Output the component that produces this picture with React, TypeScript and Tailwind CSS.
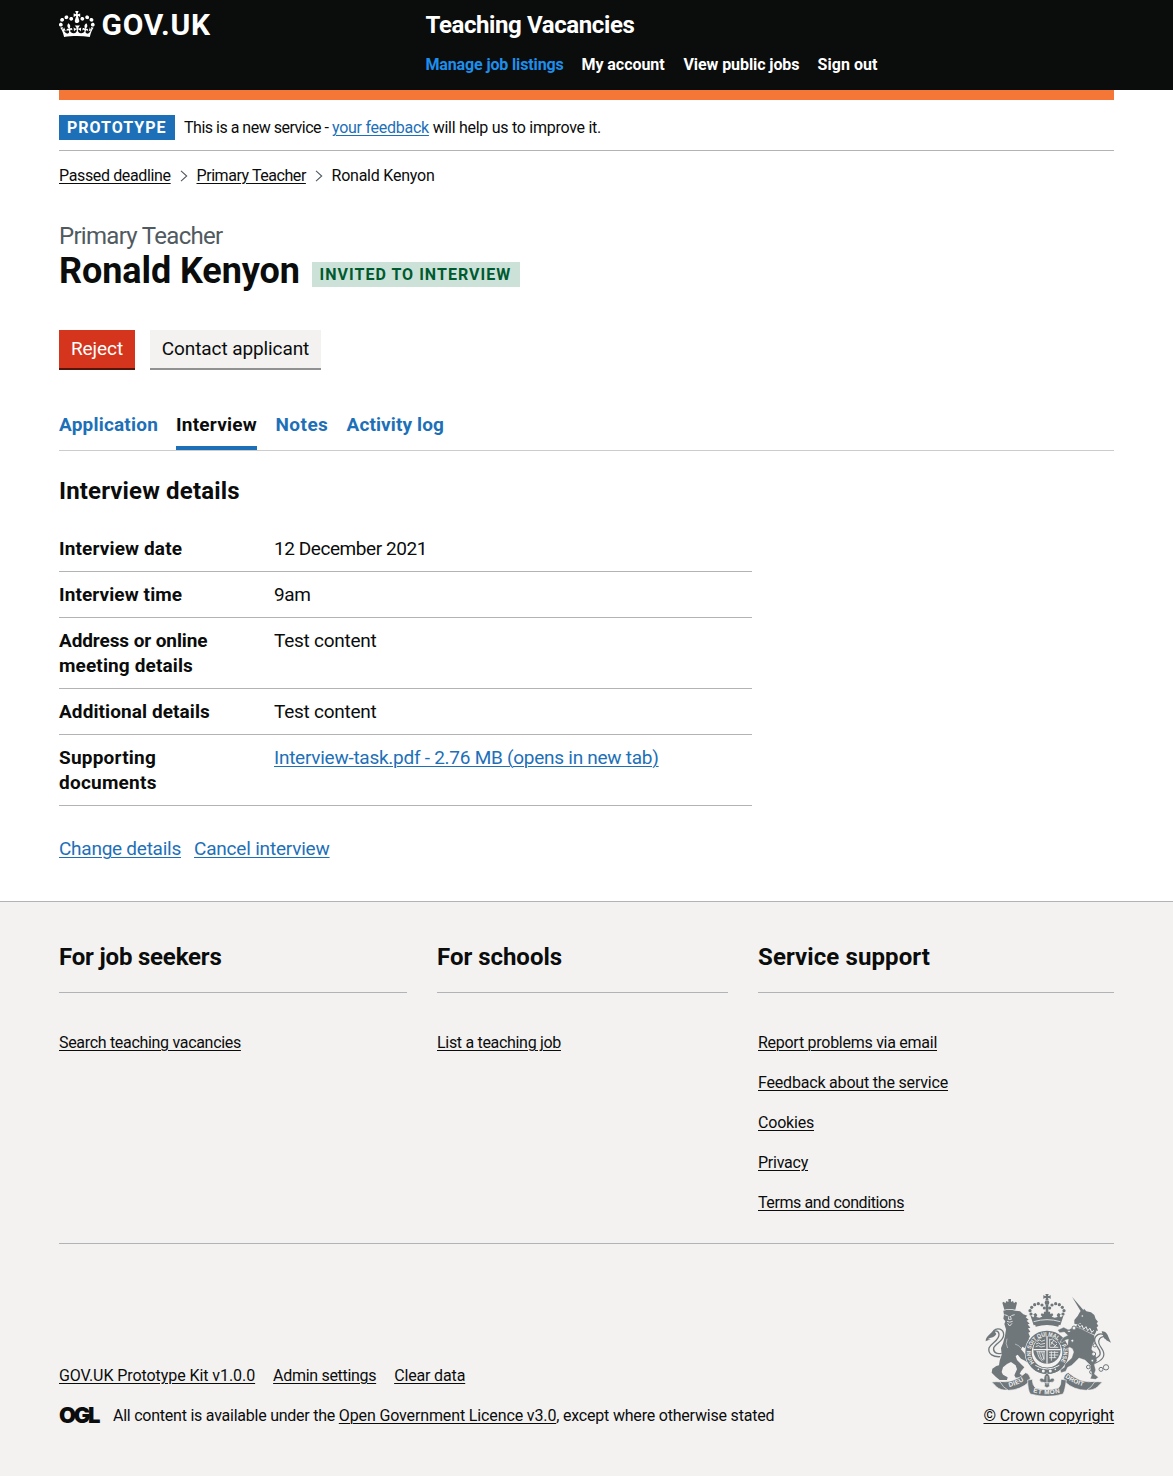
import type { ReactNode } from "react";

const LINK = "underline decoration-1 underline-offset-[2px] whitespace-pre";

function Link({ className = "", children }: { className?: string; children: ReactNode }) {
  return (
    <a href="#" className={`${LINK} ${className}`}>
      {children}
    </a>
  );
}

function Crown() {
  return (
    <svg viewBox="0 4.1 36 26" className="h-[26px] w-[36px] fill-white" aria-hidden="true">
      <path d="M6.7 12.2c1 .4 2.1-.1 2.5-1s-.1-2.1-1-2.5c-1-.4-2.1.1-2.5 1-.4 1 0 2.1 1 2.5m-4.3 2.5c1 .4 2.1-.1 2.5-1s-.1-2.1-1-2.5c-1-.4-2.1.1-2.5 1-.5 1 0 2.1 1 2.5m-1.3 4.8c1 .4 2.1-.1 2.5-1 .4-1-.1-2.1-1-2.5-1-.4-2.1.1-2.5 1-.4 1 0 2.1 1 2.5m10.4-5.8c1 .4 2.1-.1 2.5-1s-.1-2.1-1-2.5c-1-.4-2.1.1-2.5 1s0 2.1 1 2.5m17.4-1.5c-1 .4-2.1-.1-2.5-1s.1-2.1 1-2.5c1-.4 2.1.1 2.5 1 .5 1 0 2.1-1 2.5m4.3 2.5c-1 .4-2.1-.1-2.5-1s.1-2.1 1-2.5c1-.4 2.1.1 2.5 1 .5 1 0 2.1-1 2.5m1.3 4.8c-1 .4-2.1-.1-2.5-1-.4-1 .1-2.1 1-2.5 1-.4 2.1.1 2.5 1 .5 1 0 2.1-1 2.5m-10.4-5.8c-1 .4-2.1-.1-2.5-1s.1-2.1 1-2.5c1-.4 2.1.1 2.5 1s0 2.1-1 2.5m-5.3-4.9 2.4 1.3V6.5l-2.4.8c-.1-.1-.1-.2-.2-.2s1-3 1-3h-3.4l1 3c-.1.1-.2.1-.2.2-.1.1-2.4-.7-2.4-.7v3.5L17 8.8c.1.1.1.2.2.2l-1.3 4.4c-.1.2-.1.4-.1.6 0 1.1.8 2 1.9 2.2h.7c1-.2 1.9-1.1 1.9-2.1 0-.2 0-.4-.1-.6l-1.3-4.4c-.1-.2 0-.2.1-.3m-1 20.3c4.6 0 8.9.3 12.8.9 1.1-4.6 2.4-7.2 3.8-9.1l-2.6-.9c.3 1.3.3 1.9 0 2.8-.4-.4-.8-1.2-1.1-2.4l-1.2 4.2c.8-.5 1.4-.9 2-.9-1.2 2.6-2.7 3.2-3.6 3-1.2-.2-1.7-1.3-1.5-2.2.3-1.3 1.6-1.6 2.2-.1 1.2-2.4-.8-3.1-2.1-2.4 1.9-1.9 2.2-3.6.6-5.7-2.2 1.7-2.2 3.3-1.2 5.6-1.3-1.5-3.3-.7-2.5 1.7.9-1.4 2.1-.5 1.9.8-.2 1.2-1.7 2.1-3.7 1.9-2.7-.2-2.9-2.1-2.9-3.6.7-.1 1.9.5 2.9 1.9l.4-4.3c-1.1 1.1-2.1 1.4-3.2 1.4.4-1.2 2.1-3 2.1-3h-5.4s1.7 1.8 2.1 3c-1.1 0-2.1-.2-3.2-1.4l.4 4.3c1-1.4 2.2-2 2.9-1.9-.1 1.5-.2 3.4-2.9 3.6-1.9.2-3.5-.7-3.7-1.9-.2-1.3 1-2.2 1.9-.8.7-2.4-1.3-3.1-2.6-1.7 1-2.3 1-4-1.2-5.6-1.6 2.1-1.3 3.8.6 5.7-1.3-.7-3.2 0-2.1 2.4.6-1.5 1.9-1.1 2.2.1.2.9-.4 1.9-1.5 2.2-1 .2-2.5-.5-3.7-3 .7 0 1.3.4 2 .9L5 20.4c-.3 1.2-.7 1.9-1.2 2.4-.3-.8-.2-1.5 0-2.8l-2.6.9C2.7 22.8 4 25.4 5.1 30c3.8-.5 8.2-.9 12.7-.9" />
    </svg>
  );
}

function Chevron() {
  return (
    <svg viewBox="0 0 8 12" className="h-[12px] w-[8px] fill-none stroke-[#505a5f]" aria-hidden="true">
      <path d="M1 .8 6.7 6 1 11.2" strokeWidth="1.1" />
    </svg>
  );
}

const CROWN_PEARLS = [
  [168, 86], [165, 76], [170, 66], [179, 58], [190, 55], [201, 59], [208, 68],
  [264, 86], [267, 76], [262, 66], [253, 58], [242, 55], [231, 59], [224, 68],
];

function Crest() {
  return (
    <svg viewBox="30 26 378 306" className="h-[102px] w-[126px]" fill="#6f777b" aria-hidden="true">
      <defs>
        <path id="garter" d="M178 232 A49 49 0 1 1 254 232" />
        <path id="scrollLeft" d="M103 305 Q133 298 160 277" />
        <path id="scrollMid" d="M174 321 Q216 333 262 320" />
        <path id="scrollRight" d="M270 276 Q298 297 338 306" />
      </defs>

      {/* lion */}
      <g>
        <path d="M82 52l4-3 5 5 3-7 6 3v-9h8v9l6-3 3 7 5-5 4 3-5 21q-17-4-33 0z" />
        <path d="M85 76 Q103 70 121 76 L135 78 L145 87 L157 91 L152 96 L161 103 L155 106 L164 115 L158 117 L166 127 L159 129 L166 139 L160 142 L165 154 L161 159 L172 176 L178 186 L176 198 L164 200 L154 190 L142 184 L138 192 L150 206 L160 216 L168 226 L160 234 L150 226 L138 220 L128 208 L122 212 L126 224 L140 238 L148 246 L138 258 L134 266 L142 270 L142 276 L122 277 L118 270 L126 252 L122 240 L108 230 L96 236 L84 246 L80 260 L84 268 L98 276 L96 284 L74 284 L62 274 L50 262 L52 250 L64 242 L72 240 L74 226 L80 208 L78 188 L84 174 L90 152 L93 132 L88 116 L91 108 L85 100 L87 88Z" />
        <path d="M88 88l10 3M109 91l10-3M102 92l-2 10h9l-3-10M96 108q8 5 17 0M98 114l6 8 7-8" fill="none" stroke="#f3f2f1" strokeWidth="2.5" />
        <path d="M96 160q-6 14 2 28M120 176q12 4 18 12" fill="none" stroke="#f3f2f1" strokeWidth="1.5" />
        <path d="M76 214C56 216 38 206 42 188c6-16 32-22 30-42-2-12-16-13-20 0" fill="none" stroke="#6f777b" strokeWidth="4" />
        <path d="M80 204c-16 4-26-4-24-16 4-14 30-20 30-40 0-18-20-22-30-12" fill="none" stroke="#6f777b" strokeWidth="4" />
        <path d="M32 168c0-16 14-20 24-34l8 12c-6 12-20 10-26 16 4 0 6 0 10-1-6 3-12 4-16 7z" />
      </g>

      {/* garter and shield */}
      <circle cx="216" cy="201" r="67" fill="#f3f2f1" />
      <circle cx="216" cy="201" r="55.5" fill="none" stroke="#6f777b" strokeWidth="19" />
      <circle cx="216" cy="195" r="43" fill="#f3f2f1" />
      <circle cx="216" cy="194" r="41" />
      <text fill="#f3f2f1" fontSize="17.5" fontWeight="700" fontFamily="Liberation Sans, sans-serif">
        <textPath href="#garter" textLength="216" lengthAdjust="spacingAndGlyphs">HONI SOIT QUI MAL Y PENSE</textPath>
      </text>
      <g stroke="#f3f2f1" strokeWidth="2.4" fill="none">
        <path d="M216 153v82M175 193h82" strokeWidth="3.5" />
        <path d="M186 168l8-4 6 4 10-4M183 176l8-3 6 4 13-3M182 184l8-3 8 4 12-3" />
        <path d="M224 160v26h26M224 164l8-3 14 12M228 170l16 14M236 164l-8 14M246 176l-10 10" />
        <path d="M188 199c0 12 6 22 14 28M194 199c0 10 4 20 11 26M200 199l7 24M207 198v24M184 199h26" />
        <path d="M222 201h28M222 209h28M222 217h22M229 198v28M239 198v20" />
      </g>
      <path d="M182 238q34 18 70 0l8 12q-42 30-86 0z" />
      <path d="M181 240q36 22 72 0" fill="none" stroke="#f3f2f1" strokeWidth="3" />
      <g fill="#f3f2f1">
        <circle cx="205" cy="257" r="4.5" />
        <circle cx="226" cy="257" r="4.5" />
        <circle cx="190" cy="252" r="2.5" />
        <circle cx="241" cy="252" r="2.5" />
      </g>

      {/* unicorn */}
      <g>
        <path d="M291 34l36 42-8 5z" />
        <path d="M298 104l10-12 8-14 8-1 3-7 7 8 14 3 10 8 4 12 7 8-4 5 5 8-5 4 4 10-6 0-3 7q-18-14-38-18l-6-12-12 4-6-2z" />
        <path d="M308 112l56 26-5 10-56-22z" />
        <path d="M309 117l6 9 6-6 5 12 7-8 5 12 7-7 5 12 7-6" fill="none" stroke="#f3f2f1" strokeWidth="3" />
        <circle cx="322" cy="92" r="2.5" fill="#f3f2f1" />
        <path d="M286 130 L300 124 L318 130 L358 150 L360 164 L352 182 L350 192 L362 210 L366 226 L358 238 L362 254 L358 266 L370 276 L362 282 L346 280 L351 266 L346 252 L346 240 L330 224 L312 218 L298 232 L290 240 L278 246 L272 258 L258 262 L256 254 L268 246 L270 236 L290 218 L296 200 L292 190 L284 186 L272 192 L266 186 L278 178 L280 162 L272 164 L262 172 L256 168 L266 156 L278 150 L268 140 L254 142 L248 134 L266 126 L282 134Z" stroke="#f3f2f1" strokeWidth="1" />
        <path d="M350 226c18-10 30-14 24-30-8-16-22-28-12-42 8-12 22-10 30-2" fill="none" stroke="#6f777b" strokeWidth="4" />
        <path d="M360 234c20-8 32-20 24-38-8-14-18-24-10-36 6-8 16-8 22-2" fill="none" stroke="#6f777b" strokeWidth="3.5" />
        <path d="M380 138c10-2 18 8 20 16l8 18c-8-5-12-4-16-10-4 0-8-10-12-24z" />
        <g fill="none" stroke="#6f777b" strokeWidth="3">
          <circle cx="340" cy="245" r="5.5" />
          <circle cx="350" cy="260" r="6" />
          <circle cx="378" cy="252" r="6" />
          <circle cx="393" cy="246" r="8" />
        </g>
        <g fill="#f3f2f1" stroke="#6f777b" strokeWidth="3">
          <circle cx="297" cy="128" r="6" />
          <circle cx="282" cy="138" r="4" />
          <circle cx="292" cy="166" r="4.5" />
          <circle cx="359" cy="180" r="5" />
          <circle cx="356" cy="206" r="6" />
          <circle cx="352" cy="226" r="4" />
        </g>
      </g>

      {/* royal crown */}
      <path d="M211 26h10l-2 6h5v-2h3v10h-3v-2h-5l2 7h-10l2-7h-5v2h-3V30h3v2h5z" />
      <circle cx="216" cy="52" r="7" />
      <path d="M212 58h8v34h-8z" />
      {CROWN_PEARLS.map(([x, y]) => (
        <circle key={`${x}-${y}`} cx={x} cy={y} r="4.8" />
      ))}
      <path d="M166 90l9 6 3-4-3-5 7-4 5 6-3 6 9 2 9-3-5-5 3-5 6 2 1-7h8v8h2v-8h8l1 7 6-2 3 5-5 5 9 3 9-2-3-6 5-6 7 4-3 5 3 4 9-6-10 30q-40-14-80 0z" />
      <path d="M176 109q40-12 80 0" fill="none" stroke="#f3f2f1" strokeWidth="2.5" />
      <path d="M180 116q36-10 72 0l-2 8q-34-10-68 0z" />

      {/* motto ribbon */}
      <g stroke="#f3f2f1" strokeWidth="2">
        <path d="M50 290q14-2 28 0l22 24q-24 2-36-10z" />
        <path d="M382 290q-14-2-28 0l-22 24q24 2 36-10z" />
        <path d="M74 288q40 8 78-26 10 2 14 16l-4 12q-26 24-62 25-16-8-26-27z" />
        <path d="M360 288q-40 8-80-26-10 2-14 16l4 12q26 24 64 25 16-8 26-27z" />
        <path d="M158 284l14-2q0 18 10 26 34 10 68 0 9-8 8-26l16 2q-4 32-10 42-46 14-98 0-8-12-8-42z" />
      </g>
      <path d="M207 282q-2-10 9-20 11 10 9 20 10-7 13 1 0 9-12 8l-4 4 2 8-8 4-8-4 2-8-4-4q-12 1-12-8 3-8 13-1z" stroke="#f3f2f1" strokeWidth="1.5" />
      <path d="M216 272v26M204 292h24" stroke="#f3f2f1" strokeWidth="2" />
      <g fill="#f3f2f1" fontSize="19" fontWeight="700" fontFamily="Liberation Sans, sans-serif">
        <text><textPath href="#scrollLeft" textLength="48">DIEU</textPath></text>
        <text><textPath href="#scrollMid" textLength="82">ET MON</textPath></text>
        <text><textPath href="#scrollRight" textLength="60">DROIT</textPath></text>
      </g>
    </svg>
  );
}

const SUMMARY: { key: { text: string; tracking: string }[]; value: ReactNode }[] = [
  {
    key: [{ text: "Interview date", tracking: "tracking-[0.14px]" }],
    value: <span className="tracking-[-0.43px]">12 December 2021</span>,
  },
  {
    key: [{ text: "Interview time", tracking: "tracking-[0.1px]" }],
    value: <span className="tracking-[-0.35px]">9am</span>,
  },
  {
    key: [
      { text: "Address or online", tracking: "tracking-[-0.1px]" },
      { text: "meeting details", tracking: "tracking-[0.13px]" },
    ],
    value: <span className="tracking-[-0.25px]">Test content</span>,
  },
  {
    key: [{ text: "Additional details", tracking: "tracking-[0.09px]" }],
    value: <span className="tracking-[-0.25px]">Test content</span>,
  },
  {
    key: [
      { text: "Supporting", tracking: "tracking-[0.22px]" },
      { text: "documents", tracking: "tracking-[0.24px]" },
    ],
    value: <Link className="tracking-[-0.26px] text-[#1d70b8]">Interview-task.pdf - 2.76 MB (opens in new tab)</Link>,
  },
];

function FooterColumn({ title, titleClass, className, children }: { title: string; titleClass: string; className: string; children: ReactNode }) {
  return (
    <div className={className}>
      <h2 className={`border-b border-[#b1b4b6] pb-5 text-[24px] leading-[30px] font-bold whitespace-nowrap ${titleClass}`}>{title}</h2>
      <ul className="mt-10 flex flex-col gap-5">{children}</ul>
    </div>
  );
}

export default function App() {
  return (
    <div className="flex min-h-[1476px] w-full flex-col bg-white font-['Roboto',sans-serif] text-[16px] leading-5 text-[#0b0c0c]">
      <header className="h-[90px] bg-[#0b0c0c] text-white">
        <div className="mx-[59px] flex">
          <div className="flex w-[366.5px] pt-[11px]">
            <Crown />
            <span className="ml-[6.5px] h-[30px] text-[30px] leading-[28px] font-bold tracking-[0.75px]">GOV.UK</span>
          </div>
          <div>
            <div className="pt-[10px] text-[24px] leading-[30px] font-bold tracking-[-0.39px]">Teaching Vacancies</div>
            <nav className="mt-[15px] flex font-bold whitespace-nowrap">
              <a href="#" className="w-[156px] tracking-[-0.14px] text-[#1d8feb]">Manage job listings</a>
              <a href="#" className="w-[102px] tracking-[-0.06px]">My account</a>
              <a href="#" className="w-[134px] tracking-[-0.08px]">View public jobs</a>
              <a href="#" className="tracking-[0.05px]">Sign out</a>
            </nav>
          </div>
        </div>
      </header>

      <main className="mx-[59px] h-[811px]">
        <div className="h-[10px] bg-[#f47738]" />
        <div className="flex h-[51px] border-b border-[#b1b4b6] pt-[15px]">
          <strong className="h-[25px] w-[116px] bg-[#1d70b8] pl-2 leading-[25px] tracking-[1px] text-white">PROTOTYPE</strong>
          <p className="ml-[9px] leading-[26px] whitespace-pre">
            <span className="tracking-[-0.49px]">This is a new service - </span>
            <Link className="tracking-[-0.26px] text-[#1d70b8]">your feedback</Link>
            <span className="tracking-[-0.27px]"> will help us to improve it.</span>
          </p>
        </div>

        <nav className="mt-[15px] flex h-5 items-center">
          <Link className="w-[111.5px] tracking-[-0.36px]">Passed deadline</Link>
          <span className="ml-[9.5px] w-[16.5px]"><Chevron /></span>
          <Link className="w-[110px] tracking-[-0.44px]">Primary Teacher</Link>
          <span className="ml-[8.5px] w-[16.5px]"><Chevron /></span>
          <span className="tracking-[-0.23px]">Ronald Kenyon</span>
        </nav>

        <div className="mt-[35px] text-[24px] leading-[30px] tracking-[-0.7px] text-[#505a5f]">Primary Teacher</div>
        <div className="flex h-10">
          <h1 className="w-[253px] text-[36px] leading-10 font-bold tracking-[-0.08px] whitespace-nowrap">Ronald Kenyon</h1>
          <strong className="mt-[11px] h-[25px] w-[208px] bg-[#cce2d8] pl-[7.5px] leading-[25px] tracking-[1.02px] whitespace-nowrap text-[#005a30]">INVITED TO INTERVIEW</strong>
        </div>

        <div className="mt-[39px] flex gap-[15px] text-[19px] leading-[38px]">
          <button className="h-10 w-[76px] border-b-2 border-[#55150b] bg-[#d4351c] tracking-[-0.09px] text-white">Reject</button>
          <button className="h-10 w-[171px] border-b-2 border-[#929191] bg-[#f3f2f1] tracking-[-0.1px]">Contact applicant</button>
        </div>

        <nav className="mt-[42px] flex h-[39px] border-b border-[#cccccc] text-[19px] leading-[25px] font-bold whitespace-nowrap text-[#1d70b8]">
          <a href="#" className="w-[117px] tracking-[0.2px]">Application</a>
          <a href="#" className="mr-[18.5px] h-[38px] w-[81px] border-b-4 border-[#1d70b8] tracking-[0.23px] text-[#0b0c0c]">Interview</a>
          <a href="#" className="w-[71px] tracking-[0.45px]">Notes</a>
          <a href="#" className="tracking-[0.12px]">Activity log</a>
        </nav>

        <h2 className="mt-[25px] text-[24px] leading-[30px] font-bold tracking-[0.15px]">Interview details</h2>

        <dl className="mt-5 w-[693px] text-[19px] leading-[25px]">
          {SUMMARY.map((row) => (
            <div key={row.key[0].text} className="flex border-b border-[#b1b4b6] py-[10px]">
              <dt className="w-[215px] font-bold">
                {row.key.map((line) => (
                  <span key={line.text} className={`block ${line.tracking}`}>{line.text}</span>
                ))}
              </dt>
              <dd>{row.value}</dd>
            </div>
          ))}
        </dl>

        <div className="mt-[30px] flex text-[19px] leading-[25px] text-[#1d70b8]">
          <Link className="mr-[13px] tracking-[-0.25px]">Change details</Link>
          <Link className="tracking-[-0.2px]">Cancel interview</Link>
        </div>
      </main>

      <footer className="grow border-t border-[#b1b4b6] bg-[#f3f2f1] px-[59px]">
        <div className="flex h-[342px] gap-[30px] border-b border-[#b1b4b6] pt-10">
          <FooterColumn title="For job seekers" titleClass="tracking-[-0.19px]" className="w-[348px]">
            <li><Link className="tracking-[-0.31px]">Search teaching vacancies</Link></li>
          </FooterColumn>
          <FooterColumn title="For schools" titleClass="tracking-[-0.02px]" className="w-[291px]">
            <li><Link className="tracking-[-0.31px]">List a teaching job</Link></li>
          </FooterColumn>
          <FooterColumn title="Service support" titleClass="tracking-[0.1px]" className="w-[356px]">
            <li><Link className="tracking-[-0.27px]">Report problems via email</Link></li>
            <li><Link className="tracking-[-0.19px]">Feedback about the service</Link></li>
            <li><Link className="tracking-[-0.2px]">Cookies</Link></li>
            <li><Link className="tracking-[-0.24px]">Privacy</Link></li>
            <li><Link className="tracking-[-0.4px]">Terms and conditions</Link></li>
          </FooterColumn>
        </div>

        <div className="flex items-end justify-between pt-[50px]">
          <div className="flex flex-col gap-5">
            <div className="flex gap-[18px]">
              <Link className="tracking-[-0.07px]">GOV.UK Prototype Kit v1.0.0</Link>
              <Link className="tracking-[-0.31px]">Admin settings</Link>
              <Link className="tracking-[-0.15px]">Clear data</Link>
            </div>
            <div className="flex h-5">
              <span className="w-[54px] font-['Inter',sans-serif] text-[22px] leading-[18px] font-black tracking-[-2.3px]">OGL</span>
              <p className="whitespace-pre">
                <span className="tracking-[-0.24px]">All content is available under the </span>
                <Link className="tracking-[-0.13px]">Open Government Licence v3.0</Link>
                <span className="tracking-[-0.2px]">, except where otherwise stated</span>
              </p>
            </div>
          </div>
          <div className="flex w-[130.5px] flex-col">
            <span className="ml-[1.5px]"><Crest /></span>
            <Link className="mt-[10px] tracking-[-0.11px]">© Crown copyright</Link>
          </div>
        </div>
      </footer>
    </div>
  );
}
